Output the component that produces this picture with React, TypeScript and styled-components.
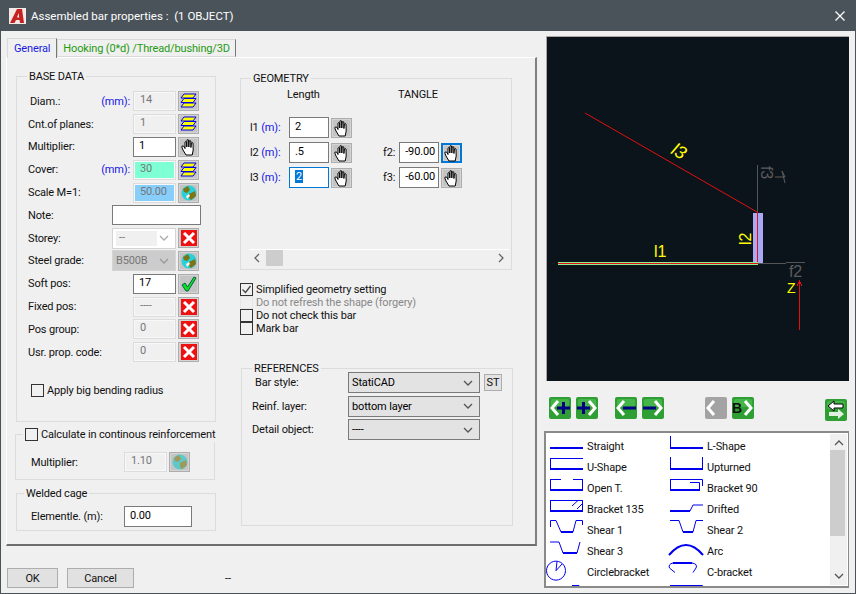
import React from "react";
import styled, { createGlobalStyle } from "styled-components";

const GlobalStyle = createGlobalStyle`
  html, body {
    margin: 0;
    padding: 0;
    background: #f0f0f0;
  }
  * {
    box-sizing: border-box;
  }
`;

const Window = styled.div`
  width: 856px;
  height: 594px;
  overflow: hidden;
  display: flex;
  flex-direction: column;
  background: #f0f0f0;
  border: 1px solid #4a535a;
  border-top: 0;
  font-family: Roboto, "Open Sans", sans-serif;
  font-size: 11px;
  letter-spacing: -0.15px;
  color: #111;
`;

const TitleBar = styled.div`
  height: 31px;
  flex: none;
  display: flex;
  align-items: center;
  padding: 0 9px 0 8px;
  background: #4a535a;
  color: #fff;
  font-size: 11.5px;
  letter-spacing: 0;
`;

const TitleText = styled.span`
  margin-left: 5px;
  flex: 1;
  white-space: pre;
`;

const Body = styled.div`
  flex: 1;
  display: flex;
  min-height: 0;
`;

const LeftPane = styled.div`
  width: 545px;
  flex: none;
  display: flex;
  flex-direction: column;
  padding: 7px 0 0 5px;
`;

const TabStrip = styled.div`
  display: flex;
  height: 19px;
  padding-left: 1px;
  align-items: flex-end;
`;

const Tab = styled.div<{ $active?: boolean }>`
  height: ${(p) => (p.$active ? "20px" : "18px")};
  margin-bottom: ${(p) => (p.$active ? "-1px" : "0")};
  padding: 0 ${(p) => (p.$active ? "6px" : "5px")};
  display: flex;
  align-items: center;
  background: #f0f0f0;
  border: 1px solid #d9d9d9;
  border-bottom: ${(p) => (p.$active ? "0" : "1px solid #d9d9d9")};
  border-right-color: #777;
  color: ${(p) => (p.$active ? "#1a1ae0" : "#1f9a12")};
  position: relative;
  z-index: ${(p) => (p.$active ? 1 : 0)};
  white-space: nowrap;
`;

const TabPanel = styled.div`
  width: 531px;
  height: 489px;
  display: flex;
  padding: 18px 0 0 9px;
  border-top: 1px solid #fff;
  border-left: 1px solid #fff;
  border-right: 2px solid #808080;
  border-bottom: 2px solid #6d6d6d;
`;

const LeftColumn = styled.div`
  width: 202px;
  flex: none;
  display: flex;
  flex-direction: column;
`;

const RightColumn = styled.div`
  width: 273px;
  margin-left: 22px;
  padding-top: 2px;
  flex: none;
  display: flex;
  flex-direction: column;
`;

const Group = styled.div<{ $h: number; $top?: number; $left?: number; $w?: number }>`
  position: relative;
  margin: ${(p) => p.$top ?? 0}px 0 0 ${(p) => p.$left ?? 0}px;
  width: ${(p) => p.$w ?? 200}px;
  height: ${(p) => p.$h}px;
  flex: none;
  border: 1px solid #dcdcdc;
`;

const Legend = styled.span<{ $left?: number }>`
  position: absolute;
  top: -8px;
  left: ${(p) => p.$left ?? 10}px;
  padding: 0 2px;
  line-height: 15px;
  background: #f0f0f0;
  white-space: nowrap;
  display: flex;
  align-items: center;
`;

const BaseRows = styled.div`
  padding: 13px 16px 0 11px;
  display: grid;
  grid-auto-rows: 22.8px;
`;

const Row = styled.div`
  display: flex;
  align-items: center;
  justify-content: flex-end;
  gap: 2px;
`;

const RowLabel = styled.span<{ $indent?: number }>`
  margin-right: auto;
  padding-left: ${(p) => p.$indent ?? 0}px;
  white-space: nowrap;
`;

const Unit = styled.span`
  color: #1414e6;
  white-space: nowrap;
  margin-right: 1px;
`;

const Input = styled.div<{
  $w?: number;
  $h?: number;
  $bg?: string;
  $state?: "normal" | "disabled" | "focus";
  $align?: string;
  $out?: boolean;
}>`
  width: ${(p) => p.$w ?? 43}px;
  height: ${(p) => p.$h ?? 20}px;
  flex: none;
  margin-right: ${(p) => (p.$out ? "-2px" : "0")};
  padding: 0 3px 3px 5px;
  display: flex;
  align-items: center;
  justify-content: ${(p) => p.$align ?? "flex-start"};
  white-space: pre;
  color: ${(p) => (p.$state === "disabled" ? "#777" : "#000")};
  background: ${(p) => p.$bg ?? (p.$state === "disabled" ? "#f0f0f0" : "#fff")};
  border: ${(p) =>
    p.$state === "disabled"
      ? "2px solid #f8f8f8"
      : p.$state === "focus"
      ? "1px solid #0078d7"
      : "1px solid #7a7a7a"};
  outline: ${(p) => (p.$state === "disabled" ? "1px solid #dcdcdc" : "none")};
  outline-offset: -1px;
`;

const SelectedText = styled.span`
  background: #0078d7;
  color: #fff;
  padding: 0 1px;
`;

const Select = styled.div<{ $w: number; $tone?: "plain" | "grey" | "white" }>`
  width: ${(p) => p.$w}px;
  height: 21px;
  flex: none;
  display: flex;
  align-items: center;
  justify-content: space-between;
  padding: 0 6px 0 3px;
  color: ${(p) => (p.$tone === "plain" ? "#000" : "#777")};
  background: ${(p) =>
    p.$tone === "plain" ? "#e3e3e3" : p.$tone === "grey" ? "#cccccc" : "#fff"};
  border: 1px solid ${(p) => (p.$tone === "plain" ? "#7a7a7a" : "#d4d4d4")};
`;

const SelectValue = styled.span<{ $fill?: boolean }>`
  ${(p) =>
    p.$fill
      ? "background: #f0f0f0; width: 41px; height: 15px; line-height: 13px; padding-left: 3px;"
      : "padding-left: 0;"}
`;

const IconButton = styled.div<{ $focus?: boolean }>`
  width: 21px;
  height: 20px;
  flex: none;
  display: flex;
  align-items: center;
  justify-content: center;
  background: #c4c4c4;
  border: ${(p) => (p.$focus ? "2px solid #0078d7" : "1px solid #adadad")};
  box-shadow: inset 0 0 0 1px #d4d4d4;
`;

const BendingRow = styled.label`
  display: flex;
  align-items: center;
  gap: 3px;
  margin: 20px 0 0 14px;
`;

const Box = styled.span<{ $off?: boolean }>`
  width: 13px;
  height: 13px;
  flex: none;
  display: flex;
  align-items: center;
  justify-content: center;
  background: ${(p) => (p.$off ? "#f0f0f0" : "#fff0")};
  border: 1px solid ${(p) => (p.$off ? "#e6e6e6" : "#333")};
`;

const InsetRow = styled.div<{ $top: number; $left: number }>`
  display: flex;
  align-items: center;
  padding: ${(p) => p.$top}px 0 0 ${(p) => p.$left}px;
`;

const InsetLabel = styled.span`
  width: 93px;
  flex: none;
`;

const CheckLegend = styled.span`
  display: flex;
  align-items: center;
  gap: 3px;
`;

const GeometryGrid = styled.div`
  padding: 7px 0 0 9px;
`;

const HeadRow = styled.div`
  display: flex;
  height: 17px;
  padding-left: 37px;
  align-items: center;
`;

const HeadCell = styled.span<{ $w: number }>`
  width: ${(p) => p.$w}px;
`;

const GeoRows = styled.div`
  margin-top: 12px;
  display: grid;
  grid-auto-rows: 25px;
`;

const GeoRow = styled.div`
  display: flex;
  align-items: center;
`;

const GeoLabel = styled.span`
  width: 39px;
  color: #111;
  white-space: pre;
`;

const GeoAngleLabel = styled.span`
  width: 16px;
  margin: 0 0 0 31px;
  flex: none;
`;

const GeoGap = styled.span`
  width: 2px;
  flex: none;
`;

const HScroll = styled.div`
  position: absolute;
  left: 8px;
  right: 2px;
  bottom: 3px;
  height: 17px;
  border-top: 1px solid #fff;
  display: flex;
  align-items: center;
  justify-content: space-between;
  padding: 0 3px;
`;

const HThumb = styled.span`
  position: absolute;
  left: 17px;
  top: 0;
  width: 17px;
  height: 16px;
  background: #cdcdcd;
`;

const CheckList = styled.div`
  margin-top: 13px;
  height: 52px;
  display: grid;
  grid-auto-rows: 13px;
`;

const CheckRow = styled.div<{ $off?: boolean }>`
  display: flex;
  align-items: center;
  gap: 3px;
  line-height: 13px;
  white-space: nowrap;
  color: ${(p) => (p.$off ? "#888" : "#111")};
`;

const RefRows = styled.div`
  padding: 2px 0 0 10px;
  display: grid;
  grid-auto-rows: 23.5px;
`;

const RefRow = styled.div`
  display: flex;
  align-items: center;
`;

const RefLabel = styled.span<{ $indent?: number }>`
  width: 96px;
  flex: none;
  padding-left: ${(p) => p.$indent ?? 0}px;
`;

const StButton = styled.div`
  width: 18px;
  height: 17px;
  margin: 0 0 1px 4px;
  display: flex;
  align-items: center;
  justify-content: center;
  background: #e3e3e3;
  border: 1px solid #adadad;
`;

const Footer = styled.div`
  height: 20px;
  margin-top: 22px;
  padding-left: 1px;
  display: flex;
  align-items: center;
`;

const FooterButton = styled.div<{ $w: number }>`
  width: ${(p) => p.$w}px;
  height: 20px;
  margin-right: 9px;
  display: flex;
  align-items: center;
  justify-content: center;
  background: #e1e1e1;
  border: 1px solid #adadad;
`;

const FooterNote = styled.span`
  margin-left: 82px;
`;

const RightPane = styled.div`
  flex: 1;
  padding: 5px 6px 0 0;
  display: flex;
  flex-direction: column;
`;

const Preview = styled.div`
  width: 303px;
  height: 345px;
  flex: none;
  background: #0c141b;
  border-left: 1px solid #a8a8a8;
  border-top: 1px solid #a8a8a8;
`;

const NavRow = styled.div`
  height: 24px;
  margin-top: 16px;
  padding-left: 3px;
  display: flex;
  align-items: flex-start;
`;

const NavGap = styled.span<{ $w: number }>`
  width: ${(p) => p.$w}px;
  flex: none;
`;

const SwapSlot = styled.span`
  margin-top: 2px;
`;

const ShapeBox = styled.div`
  width: 305px;
  height: 157px;
  margin: 10px 0 0 -2px;
  position: relative;
  display: flex;
  background: #fff;
  border: 2px solid #8a8a8a;
  border-width: 2px 1px 2px 2px;
  overflow: hidden;
`;

const ShapeGrid = styled.div`
  flex: 1;
  padding-top: 3px;
  display: grid;
  grid-template-columns: 120px 120px;
  grid-auto-rows: 21px;
  align-content: start;
`;

const ShapeItem = styled.div`
  display: flex;
  align-items: center;
  padding-left: 2px;
  white-space: nowrap;
`;

const ShapeIcon = styled.span`
  width: 39px;
  height: 21px;
  flex: none;
  display: flex;
`;

const VScroll = styled.div`
  width: 17px;
  margin: 1px 1px 1px 0;
  flex: none;
  position: relative;
  display: flex;
  flex-direction: column;
  align-items: center;
  justify-content: space-between;
  padding: 4px 0;
  background: #f0f0f0;
`;

const VThumb = styled.span`
  position: absolute;
  top: 16px;
  left: 0;
  width: 15px;
  height: 86px;
  background: #cdcdcd;
`;

/* icons */

const LayersIcon = () => (
  <svg width="17" height="16" viewBox="0 0 17 16">
    {[1, 5.5, 10].map((y) => (
      <polygon
        key={y}
        points={`4,${y} 16,${y} 13,${y + 4} 1,${y + 4}`}
        fill="#ffff00"
        stroke="#0000f0"
      />
    ))}
  </svg>
);

const HandIcon = () => (
  <svg width="16" height="18" viewBox="0 0 16 18">
    <path
      d="M5 17 L2 12 L0.8 9 L1.2 8 L2.6 8 L4 10.5 L4 4 Q4.7 3 5.6 4 L5.8 9 L6 2 Q6.8 1 7.6 2 L7.8 9 L8.2 3 Q9 2 9.8 3 L9.9 9.5 L10.4 5 Q11.2 4 12 5 L12.2 12 L11.2 17 Z"
      fill="#fff"
      stroke="#000"
      strokeWidth="1"
    />
  </svg>
);

const GlobeIcon = ({ pale }: { pale?: boolean }) => (
  <svg width="16" height="16" viewBox="0 0 16 16">
    <circle cx="8" cy="8" r="7.5" fill={pale ? "#5fc8c8" : "#28d0d8"} />
    <path d="M2 4 L7 1 L9 5 L6 8 L3 7 Z" fill={pale ? "#a09a5a" : "#7f7414"} />
    <path d="M8 9 L14 6 L15 11 L10 15 L8 13 Z" fill={pale ? "#a09a5a" : "#7f7414"} />
    {!pale && <path d="M5 11 L8 9 L9 11 L6 14 Z" fill="#f4f4f4" />}
  </svg>
);

const CrossIcon = () => (
  <svg width="16" height="16" viewBox="0 0 16 16">
    <rect width="16" height="16" fill="#ee1111" />
    <path d="M3 3 L13 13 M13 3 L3 13" stroke="#fff" strokeWidth="3" />
  </svg>
);

const TickIcon = () => (
  <svg width="16" height="16" viewBox="0 0 16 16">
    <path
      d="M1 9 L4 7 L6.5 11 L13 1 L15 2 L7 15 L5 15 Z"
      fill="#11dd22"
      stroke="#064"
      strokeWidth="1"
    />
  </svg>
);

const Chevron = ({ dir = "down", color = "#555" }: { dir?: string; color?: string }) => {
  const d =
    dir === "down"
      ? "M1 3 L5 7 L9 3"
      : dir === "up"
      ? "M1 7 L5 3 L9 7"
      : dir === "left"
      ? "M7 1 L3 5 L7 9"
      : "M3 1 L7 5 L3 9";
  return (
    <svg width="10" height="10" viewBox="0 0 10 10" fill="none">
      <path d={d} stroke={color} strokeWidth="1.3" />
    </svg>
  );
};

const AutocadLogo = () => (
  <svg width="17" height="16" viewBox="0 0 17 16">
    <rect width="17" height="16" fill="#f3e9e6" />
    <path d="M1 15 L8 1 L13 1 L15 15 L11 15 L10.6 12 L7 12 L5.5 15 Z" fill="#c62020" />
    <path d="M8 9.5 L10.2 9.5 L9.7 5 Z" fill="#f3e9e6" />
  </svg>
);

const CloseIcon = () => (
  <svg width="12" height="12" viewBox="0 0 12 12">
    <path d="M1.5 1.5 L10.5 10.5 M10.5 1.5 L1.5 10.5" stroke="#fff" strokeWidth="1.3" />
  </svg>
);

const CheckMark = () => (
  <svg width="11" height="11" viewBox="0 0 11 11" fill="none">
    <path d="M1.5 5.5 L4.5 8.5 L9.5 2" stroke="#444" strokeWidth="1.3" />
  </svg>
);

type Glyph = "left" | "right" | "swap";

const GreenButton = ({
  arrow,
  mark,
  off,
}: {
  arrow: Glyph;
  mark?: "plus" | "minus" | "b";
  off?: boolean;
}) => (
  <svg width="22" height="22" viewBox="0 0 22 22">
    <rect width="22" height="22" rx="2" fill={off ? "#a3a3a3" : "#2f9e35"} />
    {!off && <rect x="2" y="2" width="18" height="8" rx="2" fill="#45b54a" />}
    {arrow === "left" && (
      <path d="M9 4 L3 11 L9 18" fill="none" stroke="#fff" strokeWidth="3" />
    )}
    {arrow === "right" && (
      <path d="M13 4 L19 11 L13 18" fill="none" stroke="#fff" strokeWidth="3" />
    )}
    {arrow === "swap" && (
      <>
        <path d="M9 2 L3 7 L9 12 L9 9 L18 9 L18 5 L9 5 Z" fill="#fff" stroke="#000" />
        <path d="M13 10 L19 15 L13 20 L13 17 L4 17 L4 13 L13 13 Z" fill="#fff" opacity="0.85" />
      </>
    )}
    {(mark === "plus" || mark === "minus") && (
      <rect
        x={arrow === "left" ? 8 : 1}
        y="9.5"
        width="13"
        height="3"
        fill="#000080"
      />
    )}
    {mark === "plus" && (
      <rect x={arrow === "left" ? 13 : 6} y="5" width="3" height="12" fill="#000080" />
    )}
    {mark === "b" && (
      <text x="0" y="16" fontSize="14" fontWeight="700" fill="#111" fontFamily="Liberation Sans">
        B
      </text>
    )}
  </svg>
);

const Drawing = () => (
  <svg width="302" height="344" viewBox="547 37 302 344" fontFamily="Liberation Sans" shapeRendering="crispEdges">
    <line x1="585" y1="113" x2="757" y2="212" stroke="#e01010" shapeRendering="auto" />
    <line x1="757.5" y1="165" x2="757.5" y2="263" stroke="#555" />
    <rect x="753" y="213" width="10" height="50" fill="#a9a9f5" />
    <line x1="757.5" y1="212" x2="757.5" y2="264" stroke="#e01010" />
    <line x1="558" y1="262.5" x2="758" y2="262.5" stroke="#90ee90" />
    <line x1="558" y1="263.5" x2="758" y2="263.5" stroke="#e01010" />
    <line x1="558" y1="264.5" x2="758" y2="264.5" stroke="#90ee90" />
    <line x1="758" y1="263.5" x2="786" y2="263.5" stroke="#555" />
    <line x1="786" y1="262.5" x2="805" y2="262.5" stroke="#555" />
    <line x1="799.5" y1="281" x2="799.5" y2="330" stroke="#e01010" />
    <path d="M797 286 L799.5 281 L802 286" fill="none" stroke="#e01010" />
    <text x="654" y="257" fill="#ffff00" fontSize="16" fontWeight="300">
      l1
    </text>
    <text transform="translate(751,245) rotate(-90)" fill="#ffff00" fontSize="16">
      l2
    </text>
    <text transform="translate(670,153) rotate(30)" fill="#ffff00" fontSize="18" fontStyle="italic">
      l3
    </text>
    <text x="789" y="277" fill="#5c5c5c" fontSize="16">
      f2
    </text>
    <text transform="translate(761,166) rotate(90)" fill="#5c5c5c" fontSize="16">
      f3
    </text>
    <path d="M775 177 L785 177 L782 171 L785 183" fill="none" stroke="#5c5c5c" shapeRendering="auto" />
    <text x="787" y="293" fill="#ffff00" fontSize="14">
      Z
    </text>
  </svg>
);

const FreeSvg = styled.svg`
  overflow: visible;
`;

const ShapeSvg = ({ d, thin }: { d?: string; thin?: string }) => (
  <FreeSvg width="36" height="21" viewBox="0 0 36 21" fill="none">
    {d && <path d={d} stroke="#0000ee" strokeWidth="2" />}
    {thin && <path d={thin} stroke="#0000ee" strokeWidth="1" />}
  </FreeSvg>
);

const shapes: { label: string; d?: string; thin?: string }[] = [
  { label: "Straight", d: "M2 12 H35" },
  { label: "L-Shape", d: "M2 12 H35", thin: "M2.5 0 V12" },
  { label: "U-Shape", d: "M2 12 H35", thin: "M2.5 1 V12 M2 1.5 H35" },
  { label: "Upturned", d: "M2 12 H35", thin: "M2.5 0 V12 M34.5 0 V12" },
  { label: "Open T.", d: "M2 12 H35", thin: "M2.5 1 V12 M34.5 1 V12 M2 1.5 H13 M25 1.5 H35" },
  { label: "Bracket 90", d: "M2 12 H32", thin: "M2.5 1 V12 M2 1.5 H34.5 V8 M22 4.5 H31.5 V12" },
  { label: "Bracket 135", d: "M2 12 H35", thin: "M2.5 1 V12 M34.5 1 V12 M2 1.5 H35 M24 7 L30 1.5 M29 10 L34 5" },
  { label: "Drifted", d: "M2 12 H22", thin: "M22 12 L25 6 H35" },
  { label: "Shear 1", d: "M13 12 H25", thin: "M2.5 7 V0.5 H8 L13 12 M25 12 L28 0.5 H34.5 V5" },
  { label: "Shear 2", d: "M15 12 H25", thin: "M2 0.5 H11 L15 12 M25 12 L28 0.5 H35" },
  { label: "Shear 3", d: "M15 12 H29", thin: "M2 1 H11 L15 12 M29 12 L32 1" },
  { label: "Arc", d: "M1 14 Q18 -6 35 14" },
  { label: "Circlebracket", thin: "M17.5 8.7 A9.5 9.5 0 1 1 17.5 8.6 M8 8.7 L9 -0.5 M8 8.7 L14 2" },
  { label: "C-bracket", d: "M5 1 H24", thin: "M5 1 Q0 2 1.5 6 L7 10.5 M24 1 Q30 2 28 6 L25 10.5" },
  { label: "", thin: "M24 2.5 H31 V5" },
  { label: "", thin: "M2.5 2 V20 M2 2.5 H34.5 V20 M24 6 H32" },
];

const baseRows: {
  label: string;
  indent?: number;
  unit?: boolean;
  value: React.ReactNode;
  icon: React.ReactNode;
}[] = [
  { label: "Diam.:", indent: 2, unit: true, value: <Input $state="disabled">14</Input>, icon: <LayersIcon /> },
  { label: "Cnt.of planes:", value: <Input $state="disabled">1</Input>, icon: <LayersIcon /> },
  { label: "Multiplier:", value: <Input>1</Input>, icon: <HandIcon /> },
  { label: "Cover:", unit: true, value: <Input $state="disabled" $bg="#7fffd4">30</Input>, icon: <LayersIcon /> },
  { label: "Scale M=1:", value: <Input $state="disabled" $bg="#87cefa">50.00</Input>, icon: <GlobeIcon /> },
  { label: "Note:", value: <Input $w={89} $out />, icon: null },
  {
    label: "Storey:",
    value: (
      <Select $w={64}>
        <SelectValue $fill>--</SelectValue>
        <Chevron color="#aaa" />
      </Select>
    ),
    icon: <CrossIcon />,
  },
  {
    label: "Steel grade:",
    value: (
      <Select $w={64} $tone="grey">
        <SelectValue>B500B</SelectValue>
        <Chevron color="#999" />
      </Select>
    ),
    icon: <GlobeIcon />,
  },
  { label: "Soft pos:", value: <Input>17</Input>, icon: <TickIcon /> },
  { label: "Fixed pos:", value: <Input $state="disabled">----</Input>, icon: <CrossIcon /> },
  { label: "Pos group:", value: <Input $state="disabled">0</Input>, icon: <CrossIcon /> },
  { label: "Usr. prop. code:", value: <Input $state="disabled">0</Input>, icon: <CrossIcon /> },
];

const App = () => {
  return (
    <>
      <GlobalStyle />
      <Window>
        <TitleBar>
          <AutocadLogo />
          <TitleText>Assembled bar properties :  (1 OBJECT)</TitleText>
          <CloseIcon />
        </TitleBar>
        <Body>
          <LeftPane>
            <TabStrip>
              <Tab $active>General</Tab>
              <Tab>Hooking (0*d) /Thread/bushing/3D</Tab>
            </TabStrip>
            <TabPanel>
              <LeftColumn>
                <Group $h={346}>
                  <Legend>BASE DATA</Legend>
                  <BaseRows>
                    {baseRows.map((r) => (
                      <Row key={r.label}>
                        <RowLabel $indent={r.indent}>{r.label}</RowLabel>
                        {r.unit && <Unit>(mm):</Unit>}
                        {r.value}
                        {r.icon && <IconButton>{r.icon}</IconButton>}
                      </Row>
                    ))}
                  </BaseRows>
                  <BendingRow>
                    <Box />
                    Apply big bending radius
                  </BendingRow>
                </Group>
                <Group $h={46} $top={12} $left={-1}>
                  <Legend $left={7}>
                    <CheckLegend>
                      <Box />
                      Calculate in continous reinforcement
                    </CheckLegend>
                  </Legend>
                  <InsetRow $top={17} $left={15}>
                    <InsetLabel>Multiplier:</InsetLabel>
                    <Input $state="disabled">1.10</Input>
                    <GeoGap />
                    <IconButton>
                      <GlobeIcon pale />
                    </IconButton>
                  </InsetRow>
                </Group>
                <Group $h={38} $top={13}>
                  <Legend $left={7}>Welded cage</Legend>
                  <InsetRow $top={12} $left={14}>
                    <InsetLabel>Elementle. (m):</InsetLabel>
                    <Input $w={68} $h={21}>0.00</Input>
                  </InsetRow>
                </Group>
              </LeftColumn>
              <RightColumn>
                <Group $h={192} $w={272}>
                  <Legend>GEOMETRY</Legend>
                  <GeometryGrid>
                    <HeadRow>
                      <HeadCell $w={111}>Length</HeadCell>
                      <HeadCell $w={60}>TANGLE</HeadCell>
                    </HeadRow>
                    <GeoRows>
                      <GeoRow>
                        <GeoLabel>
                          l1 <Unit>(m):</Unit>
                        </GeoLabel>
                        <Input $w={40} $h={21}>2</Input>
                        <GeoGap />
                        <IconButton><HandIcon /></IconButton>
                      </GeoRow>
                      <GeoRow>
                        <GeoLabel>
                          l2 <Unit>(m):</Unit>
                        </GeoLabel>
                        <Input $w={40} $h={21}>.5</Input>
                        <GeoGap />
                        <IconButton><HandIcon /></IconButton>
                        <GeoAngleLabel>f2:</GeoAngleLabel>
                        <Input $w={40} $h={21} $align="flex-end">-90.00</Input>
                        <GeoGap />
                        <IconButton $focus><HandIcon /></IconButton>
                      </GeoRow>
                      <GeoRow>
                        <GeoLabel>
                          l3 <Unit>(m):</Unit>
                        </GeoLabel>
                        <Input $w={40} $h={21} $state="focus">
                          <SelectedText>2</SelectedText>
                        </Input>
                        <GeoGap />
                        <IconButton><HandIcon /></IconButton>
                        <GeoAngleLabel>f3:</GeoAngleLabel>
                        <Input $w={40} $h={21} $align="flex-end">-60.00</Input>
                        <GeoGap />
                        <IconButton><HandIcon /></IconButton>
                      </GeoRow>
                    </GeoRows>
                  </GeometryGrid>
                  <HScroll>
                    <Chevron dir="left" color="#666" />
                    <HThumb />
                    <Chevron dir="right" color="#666" />
                  </HScroll>
                </Group>
                <CheckList>
                  <CheckRow>
                    <Box><CheckMark /></Box>
                    Simplified geometry setting
                  </CheckRow>
                  <CheckRow $off>
                    <Box $off />
                    Do not refresh the shape (forgery)
                  </CheckRow>
                  <CheckRow>
                    <Box />
                    Do not check this bar
                  </CheckRow>
                  <CheckRow>
                    <Box />
                    Mark bar
                  </CheckRow>
                </CheckList>
                <Group $h={158} $top={33} $left={1} $w={272}>
                  <Legend>REFERENCES</Legend>
                  <RefRows>
                    <RefRow>
                      <RefLabel $indent={3}>Bar style:</RefLabel>
                      <Select $w={132} $tone="plain">
                        <SelectValue>StatiCAD</SelectValue>
                        <Chevron />
                      </Select>
                      <StButton>ST</StButton>
                    </RefRow>
                    <RefRow>
                      <RefLabel>Reinf. layer:</RefLabel>
                      <Select $w={132} $tone="plain">
                        <SelectValue>bottom layer</SelectValue>
                        <Chevron />
                      </Select>
                    </RefRow>
                    <RefRow>
                      <RefLabel>Detail object:</RefLabel>
                      <Select $w={132} $tone="plain">
                        <SelectValue>----</SelectValue>
                        <Chevron />
                      </Select>
                    </RefRow>
                  </RefRows>
                </Group>
              </RightColumn>
            </TabPanel>
            <Footer>
              <FooterButton $w={51}>OK</FooterButton>
              <FooterButton $w={67}>Cancel</FooterButton>
              <FooterNote>--</FooterNote>
            </Footer>
          </LeftPane>
          <RightPane>
            <Preview>
              <Drawing />
            </Preview>
            <NavRow>
              <GreenButton arrow="left" mark="plus" />
              <NavGap $w={5} />
              <GreenButton arrow="right" mark="plus" />
              <NavGap $w={17} />
              <GreenButton arrow="left" mark="minus" />
              <NavGap $w={5} />
              <GreenButton arrow="right" mark="minus" />
              <NavGap $w={41} />
              <GreenButton arrow="left" off />
              <NavGap $w={5} />
              <GreenButton arrow="right" mark="b" />
              <NavGap $w={71} />
              <SwapSlot>
                <GreenButton arrow="swap" />
              </SwapSlot>
            </NavRow>
            <ShapeBox>
              <ShapeGrid>
                {shapes.map((s, i) => (
                  <ShapeItem key={i}>
                    <ShapeIcon>
                      <ShapeSvg d={s.d} thin={s.thin} />
                    </ShapeIcon>
                    {s.label}
                  </ShapeItem>
                ))}
              </ShapeGrid>
              <VScroll>
                <Chevron dir="up" />
                <VThumb />
                <Chevron dir="down" />
              </VScroll>
            </ShapeBox>
          </RightPane>
        </Body>
      </Window>
    </>
  );
};

export default App;
